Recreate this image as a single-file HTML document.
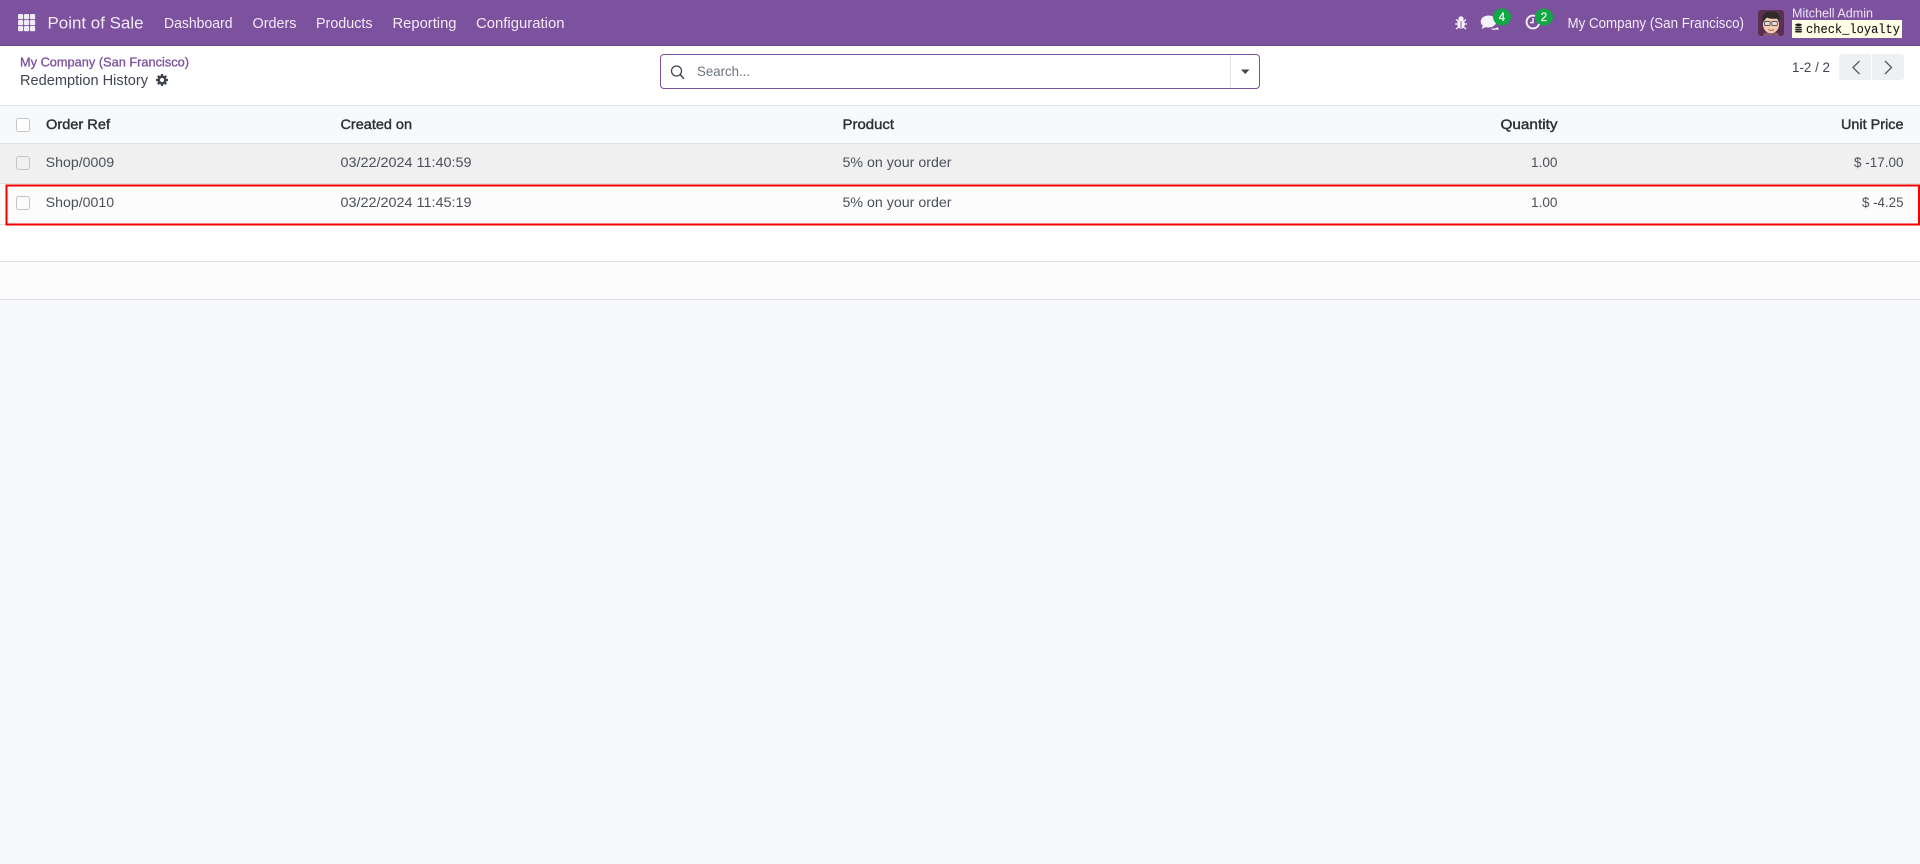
<!DOCTYPE html>
<html><head><meta charset="utf-8"><title>Redemption History</title>
<style>
html,body{margin:0;padding:0;width:1920px;height:864px;overflow:hidden;background:#f8f9fa}
svg{display:block;position:absolute;left:0;top:0}
text{font-family:"Liberation Sans",sans-serif;font-size:14px;fill:#4a4f59}
.n{fill:#f3eaf7;font-size:14.5px}
.h{fill:#2b3036;font-size:14px;stroke:#2b3036;stroke-width:.4px}
.m{font-family:"Liberation Mono",monospace;font-size:13px;fill:#1a1a1a;stroke:#1a1a1a;stroke-width:.15px}
</style></head><body>
<svg width="1920" height="864" viewBox="0 0 1920 864" xmlns="http://www.w3.org/2000/svg">
<rect width="1920" height="864" fill="#f8f9fa"/>
<!-- navbar -->
<rect width="1920" height="46" fill="#7c519e"/>
<rect y="45" width="1920" height="1" fill="#6d4690"/>
<g fill="#f1e9f5">
<rect x="18" y="14" width="5.200" height="5.200" rx="1"/><rect x="24" y="14" width="5.200" height="5.200" rx="1"/><rect x="30" y="14" width="5.200" height="5.200" rx="1"/>
<rect x="18" y="20" width="5.200" height="5.200" rx="1"/><rect x="24" y="20" width="5.200" height="5.200" rx="1"/><rect x="30" y="20" width="5.200" height="5.200" rx="1"/>
<rect x="18" y="26" width="5.200" height="5.200" rx="1"/><rect x="24" y="26" width="5.200" height="5.200" rx="1"/><rect x="30" y="26" width="5.200" height="5.200" rx="1"/>
</g>
<text class="n" x="47.500" y="28.500" style="font-size:16.500px" textLength="96" lengthAdjust="spacingAndGlyphs">Point of Sale</text>
<text class="n" x="164" y="28" textLength="68.500" lengthAdjust="spacingAndGlyphs">Dashboard</text>
<text class="n" x="252.500" y="28" textLength="44" lengthAdjust="spacingAndGlyphs">Orders</text>
<text class="n" x="316" y="28" textLength="56.500" lengthAdjust="spacingAndGlyphs">Products</text>
<text class="n" x="392.500" y="28" textLength="64" lengthAdjust="spacingAndGlyphs">Reporting</text>
<text class="n" x="476" y="28" textLength="88.500" lengthAdjust="spacingAndGlyphs">Configuration</text>
<!-- bug -->
<g fill="#f7f1fa" stroke="none">
<ellipse cx="1461" cy="24" rx="3.800" ry="5"/><circle cx="1461" cy="18.800" r="2.600"/>
</g>
<path d="M1456 19.500l2.500 2M1466 19.500l-2.500 2M1455 24h3M1467 24h-3M1456 29l2.500-2M1466 29l-2.500-2" stroke="#f7f1fa" stroke-width="1.300" fill="none"/>
<path d="M1461 21v8" stroke="#7c519e" stroke-width=".9"/>
<!-- chat -->
<ellipse cx="1488.500" cy="21.500" rx="7.800" ry="6" fill="#f7f1fa"/>
<path d="M1483 25l-1.500 4 5.500-2.500z" fill="#f7f1fa"/>
<path d="M1491 28.500c3 .3 5 0 6.500-1.500l1.500 3-3-.5c-2 .7-4 .6-5-1z" fill="#f7f1fa"/>
<ellipse cx="1502" cy="17" rx="9" ry="8.500" fill="#0fa844"/>
<text x="1502" y="21" text-anchor="middle" style="font-size:11.500px;fill:#f2f7e8;stroke:#f2f7e8;stroke-width:.3px">4</text>
<!-- clock -->
<circle cx="1533" cy="22" r="6.400" fill="none" stroke="#f7f1fa" stroke-width="1.900"/>
<path d="M1533 18v4.600h-3" stroke="#f7f1fa" stroke-width="1.500" fill="none"/>
<ellipse cx="1544" cy="17" rx="9" ry="8.500" fill="#0fa844"/>
<text x="1544" y="21" text-anchor="middle" style="font-size:11.500px;fill:#f2f7e8;stroke:#f2f7e8;stroke-width:.3px">2</text>
<text class="n" x="1567.500" y="28" textLength="176.500" lengthAdjust="spacingAndGlyphs">My Company (San Francisco)</text>
<!-- avatar -->
<rect x="1758" y="10" width="26" height="26" rx="3" fill="#5a2f4f"/>
<path d="M1763 36c0-3 3-4 8-4s8 1 8 4z" fill="#8a5a70"/>
<ellipse cx="1771" cy="24.500" rx="8" ry="8.800" fill="#f4cdb0"/>
<path d="M1762.500 23c-1.500-8 3-11.500 8-11.500s9.500 1.500 9 5.500l-.5 5-1.500-3.500c-3 .5-8 .5-10.500-1-1 1-2.500 2.500-4.500 5.500z" fill="#2e2a2c"/>
<rect x="1764.500" y="21.500" width="5.600" height="4" rx="1" fill="#e2ded6" stroke="#5a5458" stroke-width=".9"/>
<rect x="1771.700" y="21.500" width="5.600" height="4" rx="1" fill="#e2ded6" stroke="#5a5458" stroke-width=".9"/>
<path d="M1768 29.500c2 1.200 4 1.200 6 0" stroke="#a0604e" stroke-width="1" fill="none"/>
<text x="1792" y="17.500" style="font-size:12.500px;fill:#efe4f5" textLength="81" lengthAdjust="spacingAndGlyphs">Mitchell Admin</text>
<rect x="1792" y="20" width="110" height="18" fill="#ffffe6"/>
<g fill="#1a1a1a">
<ellipse cx="1798.500" cy="24.800" rx="3.300" ry="1.300"/>
<rect x="1795.200" y="26.600" width="6.600" height="1.500" rx=".6"/>
<rect x="1795.200" y="28.700" width="6.600" height="1.500" rx=".6"/>
<rect x="1795.200" y="30.800" width="6.600" height="1.700" rx=".6"/>
</g>
<text class="m" x="1806" y="33" textLength="94" lengthAdjust="spacingAndGlyphs">check_loyalty</text>
<!-- control panel -->
<rect y="46" width="1920" height="59" fill="#fff"/>
<rect y="105" width="1920" height="1" fill="#dee2e6"/>
<text x="20" y="66.500" style="font-size:12.500px;fill:#7c519e;stroke:#7c519e;stroke-width:.3px" textLength="169" lengthAdjust="spacingAndGlyphs">My Company (San Francisco)</text>
<text x="20" y="85" style="font-size:14.500px;fill:#3f4650" textLength="128" lengthAdjust="spacingAndGlyphs">Redemption History</text>
<circle cx="162" cy="80" r="4.600" fill="#3f4650"/>
<path d="M162 74v12M156 80h12M157.800 75.800l8.400 8.400M166.200 75.800l-8.400 8.400" stroke="#3f4650" stroke-width="2.200"/>
<circle cx="162" cy="80" r="2" fill="#fff"/>
<!-- search -->
<rect x="660.500" y="54.500" width="599" height="34" rx="3.500" fill="#fff" stroke="#7c519e" stroke-width="1"/>
<rect x="1230" y="55" width="1" height="33" fill="#dee2e6"/>
<circle cx="676.500" cy="71" r="5" fill="none" stroke="#3f4650" stroke-width="1.300"/>
<path d="M680 74.500l4 4.300" stroke="#3f4650" stroke-width="1.500"/>
<text x="697" y="76" style="fill:#6b727a" textLength="53" lengthAdjust="spacingAndGlyphs">Search...</text>
<path d="M1241 69.500h8.500l-4.250 4.500z" fill="#3f4650"/>
<!-- pager -->
<text x="1792" y="72" style="fill:#3f4650" textLength="38" lengthAdjust="spacingAndGlyphs">1-2 / 2</text>
<path d="M1842 54h29v26h-29a3 3 0 0 1-3-3v-20a3 3 0 0 1 3-3z" fill="#eff0f2"/>
<path d="M1872 54h29a3 3 0 0 1 3 3v20a3 3 0 0 1-3 3h-29z" fill="#eff0f2"/>
<path d="M1859.500 61l-6.500 6.500 6.500 6.500" fill="none" stroke="#555b63" stroke-width="1.300"/>
<path d="M1885 61l6.500 6.500-6.500 6.500" fill="none" stroke="#555b63" stroke-width="1.300"/>
<!-- table -->
<rect y="106" width="1920" height="37" fill="#f8f9fa"/>
<rect y="143" width="1920" height="1" fill="#dee2e6"/>
<rect y="144" width="1920" height="39" fill="#f0f0f0"/>
<rect y="183" width="1920" height="1" fill="#dee2e6"/>
<rect y="184" width="1920" height="40" fill="#fcfcfc"/>
<rect y="224" width="1920" height="1" fill="#dee2e6"/>
<rect y="225" width="1920" height="36" fill="#fff"/>
<rect y="261" width="1920" height="1" fill="#dee2e6"/>
<rect y="262" width="1920" height="37" fill="#fcfcfc"/>
<rect y="299" width="1920" height="1" fill="#dee2e6"/>
<g fill="none" stroke="#c2c4c7" stroke-width="1">
<rect x="16.500" y="118.500" width="13" height="13" rx="2.500" fill="#fff"/>
<rect x="16.500" y="156.500" width="13" height="13" rx="2.500"/>
<rect x="16.500" y="196.500" width="13" height="13" rx="2.500"/>
</g>
<text class="h" x="46" y="129" textLength="64" lengthAdjust="spacingAndGlyphs">Order Ref</text>
<text class="h" x="340.500" y="129" textLength="71.500" lengthAdjust="spacingAndGlyphs">Created on</text>
<text class="h" x="842.500" y="129" textLength="51.500" lengthAdjust="spacingAndGlyphs">Product</text>
<text class="h" x="1500.500" y="129" textLength="57" lengthAdjust="spacingAndGlyphs">Quantity</text>
<text class="h" x="1841" y="129" textLength="62.500" lengthAdjust="spacingAndGlyphs">Unit Price</text>
<text x="45.700" y="167" textLength="68.500" lengthAdjust="spacingAndGlyphs">Shop/0009</text>
<text x="340.500" y="167" textLength="131" lengthAdjust="spacingAndGlyphs">03/22/2024 11:40:59</text>
<text x="842.500" y="167" textLength="109" lengthAdjust="spacingAndGlyphs">5% on your order</text>
<text x="1531" y="167" textLength="26.500" lengthAdjust="spacingAndGlyphs">1.00</text>
<text x="1854" y="167" textLength="49.500" lengthAdjust="spacingAndGlyphs">$ -17.00</text>
<text x="45.700" y="207" textLength="68.500" lengthAdjust="spacingAndGlyphs">Shop/0010</text>
<text x="340.500" y="207" textLength="131" lengthAdjust="spacingAndGlyphs">03/22/2024 11:45:19</text>
<text x="842.500" y="207" textLength="109" lengthAdjust="spacingAndGlyphs">5% on your order</text>
<text x="1531" y="207" textLength="26.500" lengthAdjust="spacingAndGlyphs">1.00</text>
<text x="1862" y="207" textLength="41.500" lengthAdjust="spacingAndGlyphs">$ -4.25</text>
<!-- annotation -->
<rect x="6.500" y="185.500" width="1912.500" height="39" fill="none" stroke="#f00000" stroke-width="2"/>
</svg>
</body></html>
